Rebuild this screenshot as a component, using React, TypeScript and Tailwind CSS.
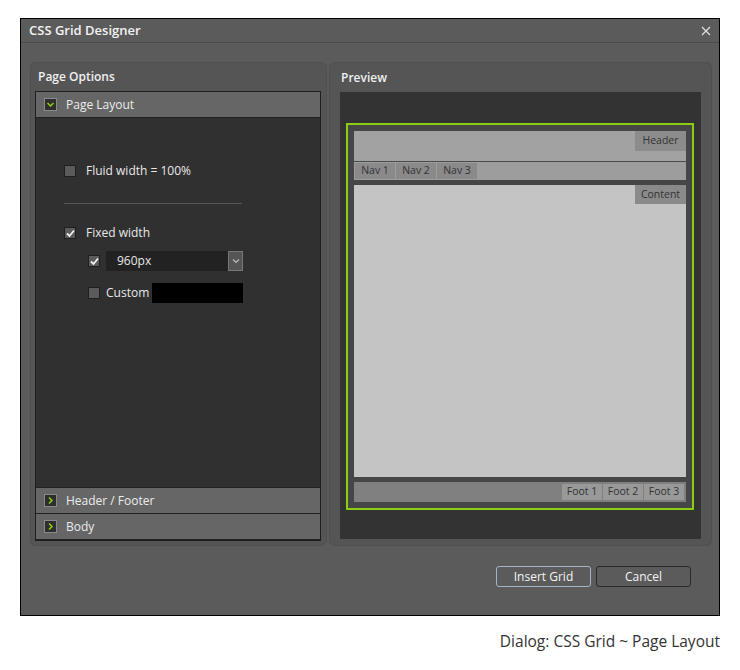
import React from 'react';

const font = { fontFamily: '"Open Sans", "Noto Sans", Arial, sans-serif' };

function CheckBox({ checked }: { checked?: boolean }) {
  return (
    <div className="w-[12px] h-[12px] border border-[#1f1f1f] bg-[#5b5b5b] flex items-center justify-center shrink-0">
      {checked && (
        <svg width="9" height="9" viewBox="0 0 9 9">
          <path d="M1 4.5 L3.5 7 L8 1.5" stroke="#f0f0f0" strokeWidth="1.8" fill="none" />
        </svg>
      )}
    </div>
  );
}

function ToggleIcon({ open }: { open?: boolean }) {
  return (
    <div className="w-[13px] h-[13px] border border-[#8a8a8a] bg-[#2e2e2e] flex items-center justify-center shrink-0">
      <svg width="9" height="9" viewBox="0 0 9 9">
        {open ? (
          <path d="M1.5 3 L4.5 6 L7.5 3" stroke="#8fd00f" strokeWidth="1.5" fill="none" />
        ) : (
          <path d="M3 1.5 L6 4.5 L3 7.5" stroke="#8fd00f" strokeWidth="1.5" fill="none" />
        )}
      </svg>
    </div>
  );
}

function SectionRow({ label, open }: { label: string; open?: boolean }) {
  return (
    <div className="h-[26px] bg-[#666666] border-b border-[#222] flex items-center pl-[8px] gap-[9px] text-[12px] text-[#ececec]">
      <ToggleIcon open={open} />
      <span>{label}</span>
    </div>
  );
}

function Tag({ children, className }: { children: React.ReactNode; className: string }) {
  return (
    <div className={`flex items-center justify-center text-[10.5px] text-[#333] ${className}`}>{children}</div>
  );
}

export default function App() {
  return (
    <div className="w-[740px] h-[670px] bg-white pt-[18px]" style={font}>
      <div className="ml-[20px] w-[700px] h-[598px] border border-black bg-[#5b5b5b] flex flex-col">
        <div className="h-[24px] border-b border-[#4b4b4b] flex items-center justify-between pl-[8px] pr-[8px]">
          <span className="text-[13px] font-semibold text-[#f2f2f2]">CSS Grid Designer</span>
          <svg width="10" height="10" viewBox="0 0 10 10">
            <path d="M1 1 L9 9 M9 1 L1 9" stroke="#dcdcdc" strokeWidth="1.3" />
          </svg>
        </div>

        <div className="pt-[19px] pl-[9px] pr-[7px] flex gap-[2px] h-[503px]">
          <div className="w-[297px] h-[484px] rounded-[6px] border border-[#4f4f4f] bg-[#555555] flex flex-col">
            <div className="h-[28px] flex items-center pl-[7px] text-[12px] font-semibold text-[#f0f0f0]">Page Options</div>
            <div className="ml-[4px] mr-[5px] h-[450px] border border-[#1e1e1e] flex flex-col">
              <SectionRow label="Page Layout" open />
              <div className="flex-1 bg-[#303030] pl-[28px] pt-[46px] text-[12px] text-[#e8e8e8]">
                <div className="flex items-center gap-[10px] h-[14px]">
                  <CheckBox />
                  <span>Fluid width = 100%</span>
                </div>
                <div className="w-[178px] h-px bg-[#585858] mt-[25px]" />
                <div className="flex items-center gap-[10px] h-[14px] mt-[22px]">
                  <CheckBox checked />
                  <span>Fixed width</span>
                </div>
                <div className="pl-[24px] mt-[11px] flex flex-col gap-[12px]">
                  <div className="flex items-center gap-[6px]">
                    <CheckBox checked />
                    <div className="w-[137px] h-[20px] bg-[#222222] flex items-center justify-between pl-[11px]">
                      <span>960px</span>
                      <div className="w-[15px] h-[20px] bg-[#555] border border-[#777] flex items-center justify-center">
                        <svg width="8" height="6" viewBox="0 0 8 6">
                          <path d="M1 1.5 L4 4.5 L7 1.5" stroke="#bdbdbd" strokeWidth="1.2" fill="none" />
                        </svg>
                      </div>
                    </div>
                  </div>
                  <div className="flex items-center gap-[6px]">
                    <CheckBox />
                    <span className="w-[40px]">Custom</span>
                    <div className="w-[91px] h-[20px] bg-black" />
                  </div>
                </div>
              </div>
              <div className="border-t border-[#222]">
                <SectionRow label="Header / Footer" />
              </div>
              <SectionRow label="Body" />
            </div>
          </div>

          <div className="flex-1 h-[484px] rounded-[6px] border border-[#4f4f4f] bg-[#555555] flex flex-col">
            <div className="h-[29px] flex items-center pl-[11px] text-[12px] font-semibold text-[#f0f0f0]">Preview</div>
            <div className="ml-[10px] mr-[10px] h-[447px] bg-[#333333] pt-[31px] pl-[6px] pr-[7px]">
              <div className="h-[387px] border-2 border-[#8ccc12] bg-[#464646] p-[6px] flex flex-col">
                <div className="h-[30px] bg-[#a2a2a2] flex justify-end">
                  <Tag className="w-[51px] h-[20px] bg-[#8c8c8c]">Header</Tag>
                </div>
                <div className="h-px bg-[#4a4a4a]" />
                <div className="h-[18px] bg-[#9d9d9d] flex gap-px p-px">
                  <Tag className="w-[40px] bg-[#8a8a8a]">Nav 1</Tag>
                  <Tag className="w-[40px] bg-[#8a8a8a]">Nav 2</Tag>
                  <Tag className="w-[40px] bg-[#8a8a8a]">Nav 3</Tag>
                </div>
                <div className="flex-1 mt-[5px] bg-[#c4c4c4] flex justify-end items-start">
                  <Tag className="w-[51px] h-[19px] bg-[#8a8a8a]">Content</Tag>
                </div>
                <div className="h-[20px] mt-[5px] bg-[#808080] flex justify-end gap-px p-[2px] pr-[2px]">
                  <Tag className="w-[40px] bg-[#999999]">Foot 1</Tag>
                  <Tag className="w-[40px] bg-[#999999]">Foot 2</Tag>
                  <Tag className="w-[40px] bg-[#999999]">Foot 3</Tag>
                </div>
              </div>
            </div>
          </div>
        </div>

        <div className="flex justify-end gap-[5px] pr-[28px] mt-[20px] text-[12px] text-[#f4f4f4]">
          <button className="w-[95px] h-[21px] rounded-[3px] border border-[#a3b4c8] bg-[#5b5b5b] flex items-center justify-center">Insert Grid</button>
          <button className="w-[95px] h-[21px] rounded-[3px] border border-[#2a2a2a] bg-[#5b5b5b] flex items-center justify-center">Cancel</button>
        </div>
      </div>
      <div className="pr-[20px] mt-[14px] text-right text-[15.5px] text-[#333]">Dialog: CSS Grid ~ Page Layout</div>
    </div>
  );
}
